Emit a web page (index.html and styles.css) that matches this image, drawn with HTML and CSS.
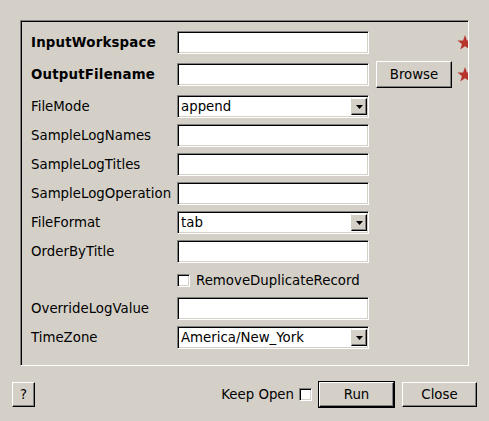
FILE: index.html
```html
<!DOCTYPE html>
<html>
<head>
<meta charset="utf-8">
<link rel="stylesheet" href="styles.css">
</head>
<body>
<div class="frame">
  <div class="form">
    <div class="row">
      <span class="label bold">InputWorkspace</span>
      <div class="field"></div>
      <span class="browse-slot"></span>
      <svg class="star" width="16" height="16" viewBox="0 0 16 16"><polygon points="8,0 9.9,5.4 15.6,5.5 11.1,8.9 12.7,14.5 8,11.2 3.3,14.5 4.9,8.9 0.4,5.5 6.1,5.4" fill="#b8342a"/></svg>
    </div>
    <div class="row tall">
      <span class="label bold">OutputFilename</span>
      <div class="field"></div>
      <button class="btn browse">Browse</button>
      <svg class="star" width="16" height="16" viewBox="0 0 16 16"><polygon points="8,0 9.9,5.4 15.6,5.5 11.1,8.9 12.7,14.5 8,11.2 3.3,14.5 4.9,8.9 0.4,5.5 6.1,5.4" fill="#b8342a"/></svg>
    </div>
    <div class="row">
      <span class="label">FileMode</span>
      <div class="field combo"><span class="val">append</span><span class="drop"><svg width="7" height="4" viewBox="0 0 7 4"><polygon points="0,0 7,0 3.5,4" fill="#000"/></svg></span></div>
    </div>
    <div class="row">
      <span class="label">SampleLogNames</span>
      <div class="field"></div>
    </div>
    <div class="row">
      <span class="label">SampleLogTitles</span>
      <div class="field"></div>
    </div>
    <div class="row">
      <span class="label">SampleLogOperation</span>
      <div class="field"></div>
    </div>
    <div class="row">
      <span class="label">FileFormat</span>
      <div class="field combo"><span class="val">tab</span><span class="drop"><svg width="7" height="4" viewBox="0 0 7 4"><polygon points="0,0 7,0 3.5,4" fill="#000"/></svg></span></div>
    </div>
    <div class="row">
      <span class="label">OrderByTitle</span>
      <div class="field"></div>
    </div>
    <div class="row check-row">
      <span class="label"></span>
      <span class="checkbox"></span>
      <span class="check-text">RemoveDuplicateRecord</span>
    </div>
    <div class="row">
      <span class="label">OverrideLogValue</span>
      <div class="field"></div>
    </div>
    <div class="row">
      <span class="label">TimeZone</span>
      <div class="field combo"><span class="val">America/New_York</span><span class="drop"><svg width="7" height="4" viewBox="0 0 7 4"><polygon points="0,0 7,0 3.5,4" fill="#000"/></svg></span></div>
    </div>
  </div>
</div>
<div class="bottom">
  <button class="btn help">?</button>
  <span class="spacer"></span>
  <span class="keep">Keep Open</span>
  <span class="checkbox keep-box"></span>
  <span class="default-frame"><button class="btn action">Run</button></span>
  <button class="btn action close">Close</button>
</div>
</body>
</html>
```
FILE: styles.css
```css
html, body {
  margin: 0;
  padding: 0;
  background: #d4d0c8;
  font-family: "DejaVu Sans", sans-serif;
  font-size: 13.333px;
  color: #000;
}

.frame {
  box-sizing: border-box;
  margin: 20px 0 0 20px;
  width: 449px;
  height: 346px;
  border-style: solid;
  border-width: 1px;
  border-color: #808080 #ffffff #ffffff #808080;
  box-shadow: inset 1px 1px 0 #000;
  overflow: hidden;
}

.form {
  display: flex;
  flex-direction: column;
  gap: 6px;
  padding: 10px 0 0 10px;
  width: 480px;
}

.row {
  display: flex;
  align-items: center;
  height: 23px;
}

.row.tall {
  height: 29px;
}

.row.check-row {
  height: 22px;
}

.label {
  width: 146px;
  flex: none;
  white-space: nowrap;
}

.bold {
  font-weight: bold;
  letter-spacing: 0.2px;
}

.field {
  box-sizing: border-box;
  width: 192px;
  height: 23px;
  flex: none;
  background: #fff;
  border-style: solid;
  border-width: 1px;
  border-color: #808080 #ffffff #ffffff #808080;
  box-shadow: inset 1px 1px 0 #000, inset -1px -1px 0 #d4d0c8;
}

.combo {
  display: flex;
  align-items: stretch;
  padding: 1px;
}

.combo .val {
  flex: 1;
  padding-left: 2px;
  line-height: 19px;
  white-space: nowrap;
}

.drop {
  box-sizing: border-box;
  width: 16px;
  margin: 1px 0 1px 0;
  background: #d4d0c8;
  border-style: solid;
  border-width: 1px;
  border-color: #ffffff #000 #000 #d4d0c8;
  box-shadow: inset -1px -1px 0 #808080;
  display: flex;
  align-items: center;
  justify-content: center;
}

.btn {
  box-sizing: border-box;
  font-family: "DejaVu Sans", sans-serif;
  font-size: 13.333px;
  color: #000;
  background: #d4d0c8;
  border-style: solid;
  border-width: 1px;
  border-color: #ffffff #000 #000 #ffffff;
  box-shadow: inset -1px -1px 0 #808080;
  padding: 0;
  margin: 0;
}

.browse {
  width: 76px;
  height: 27px;
  margin-left: 7px;
  flex: none;
}

.browse-slot {
  width: 83px;
  flex: none;
}

.star {
  flex: none;
  margin-left: 5px;
}

.checkbox {
  box-sizing: border-box;
  display: inline-block;
  width: 13px;
  height: 13px;
  flex: none;
  background: #fff;
  border-style: solid;
  border-width: 1px;
  border-color: #808080 #ffffff #ffffff #808080;
  box-shadow: inset 1px 1px 0 #000, inset -1px -1px 0 #d4d0c8;
}

.check-text {
  margin-left: 6px;
  white-space: nowrap;
}

.bottom {
  display: flex;
  align-items: center;
  margin: 15px 12px 0 12px;
  height: 27px;
}

.help {
  width: 23px;
  height: 25px;
}

.spacer {
  flex: 1;
}

.keep {
  white-space: nowrap;
}

.keep-box {
  margin-left: 5px;
}

.default-frame {
  display: flex;
  border: 1px solid #000;
  margin-left: 6px;
}

.action {
  width: 75px;
  height: 25px;
}

.close {
  margin-left: 7px;
}
```
